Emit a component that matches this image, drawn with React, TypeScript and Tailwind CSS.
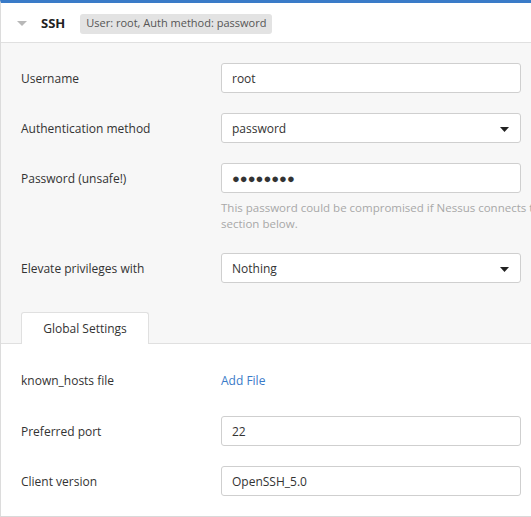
import React from "react";

const font = { fontFamily: '"Open Sans", "Noto Sans", sans-serif' };

function Caret() {
  return (
    <svg width="9" height="5" viewBox="0 0 9 5" className="absolute right-[11px] top-[13px]">
      <path d="M0 0 L9 0 L4.5 5 Z" fill="#222" />
    </svg>
  );
}

function Row({ label, children, className = "" }: { label: string; children: React.ReactNode; className?: string }) {
  return (
    <div className={"flex items-start " + className}>
      <div className="w-[200px] shrink-0 h-[30px] pt-[2px] flex items-center text-[12px] text-[#333]">{label}</div>
      {children}
    </div>
  );
}

function Input({ value, select = false, dots = false }: { value: string; select?: boolean; dots?: boolean }) {
  return (
    <div className="relative w-[300px] h-[30px] bg-white border border-[#cfcfcf] rounded-[3px] flex items-center pl-[10px] pt-[2px] text-[12px] text-[#333]">
      {dots ? <span className="text-[13px] text-[#333]">{value}</span> : value}
      {select && <Caret />}
    </div>
  );
}

export default function App() {
  return (
    <div className="w-[531px] h-[517px] overflow-hidden bg-white" style={font}>
      <div className="w-[700px] border-t-[3px] border-[#3a7bc8] border-l border-l-[#dcdcdc] border-b border-b-[#d9d9d9]">
        <div className="h-[40px] pt-[2px] bg-white border-b border-[#e0e0e0] flex items-center">
          <svg width="10" height="5" viewBox="0 0 10 5" className="ml-[16px]">
            <path d="M0 0 L10 0 L5 5 Z" fill="#b8b8b8" />
          </svg>
          <span className="ml-[14px] text-[13px] font-bold text-[#222]">SSH</span>
          <span className="ml-[15px] h-[20px] px-[6px] flex items-center rounded-[3px] bg-[#e3e3e3] text-[11px] text-[#555]">
            User: root, Auth method: password
          </span>
        </div>
        <div className="bg-[#f7f7f7] pl-[20px] pt-[20px]">
          <Row label="Username">
            <Input value="root" />
          </Row>
          <Row label="Authentication method" className="mt-[20px]">
            <Input value="password" select />
          </Row>
          <Row label="Password (unsafe!)" className="mt-[20px]">
            <div>
              <Input value="●●●●●●●●" dots />
              <div className="mt-[7px] text-[11.5px] leading-[16px] text-[#a8a8a8] whitespace-nowrap">
                <div>This password could be compromised if Nessus connects to a rogue server. Consider using the known_hosts</div>
                <div>section below.</div>
              </div>
            </div>
          </Row>
          <Row label="Elevate privileges with" className="mt-[21px]">
            <Input value="Nothing" select />
          </Row>
          <div className="mt-[28px] flex">
            <div className="w-[128px] h-[32px] pt-[1px] bg-white border border-[#e0e0e0] border-b-0 rounded-t-[3px] flex items-center justify-center text-[12px] text-[#333] relative top-[1px]">
              Global Settings
            </div>
          </div>
        </div>
        <div className="bg-white border-t border-[#e0e0e0] pl-[20px] pt-[21px] pb-[20px]">
          <Row label="known_hosts file">
            <div className="h-[30px] pt-[2px] flex items-center text-[12px] text-[#3a7bc8]">Add File</div>
          </Row>
          <Row label="Preferred port" className="mt-[21px]">
            <Input value="22" />
          </Row>
          <Row label="Client version" className="mt-[20px]">
            <Input value="OpenSSH_5.0" />
          </Row>
        </div>
      </div>
    </div>
  );
}
